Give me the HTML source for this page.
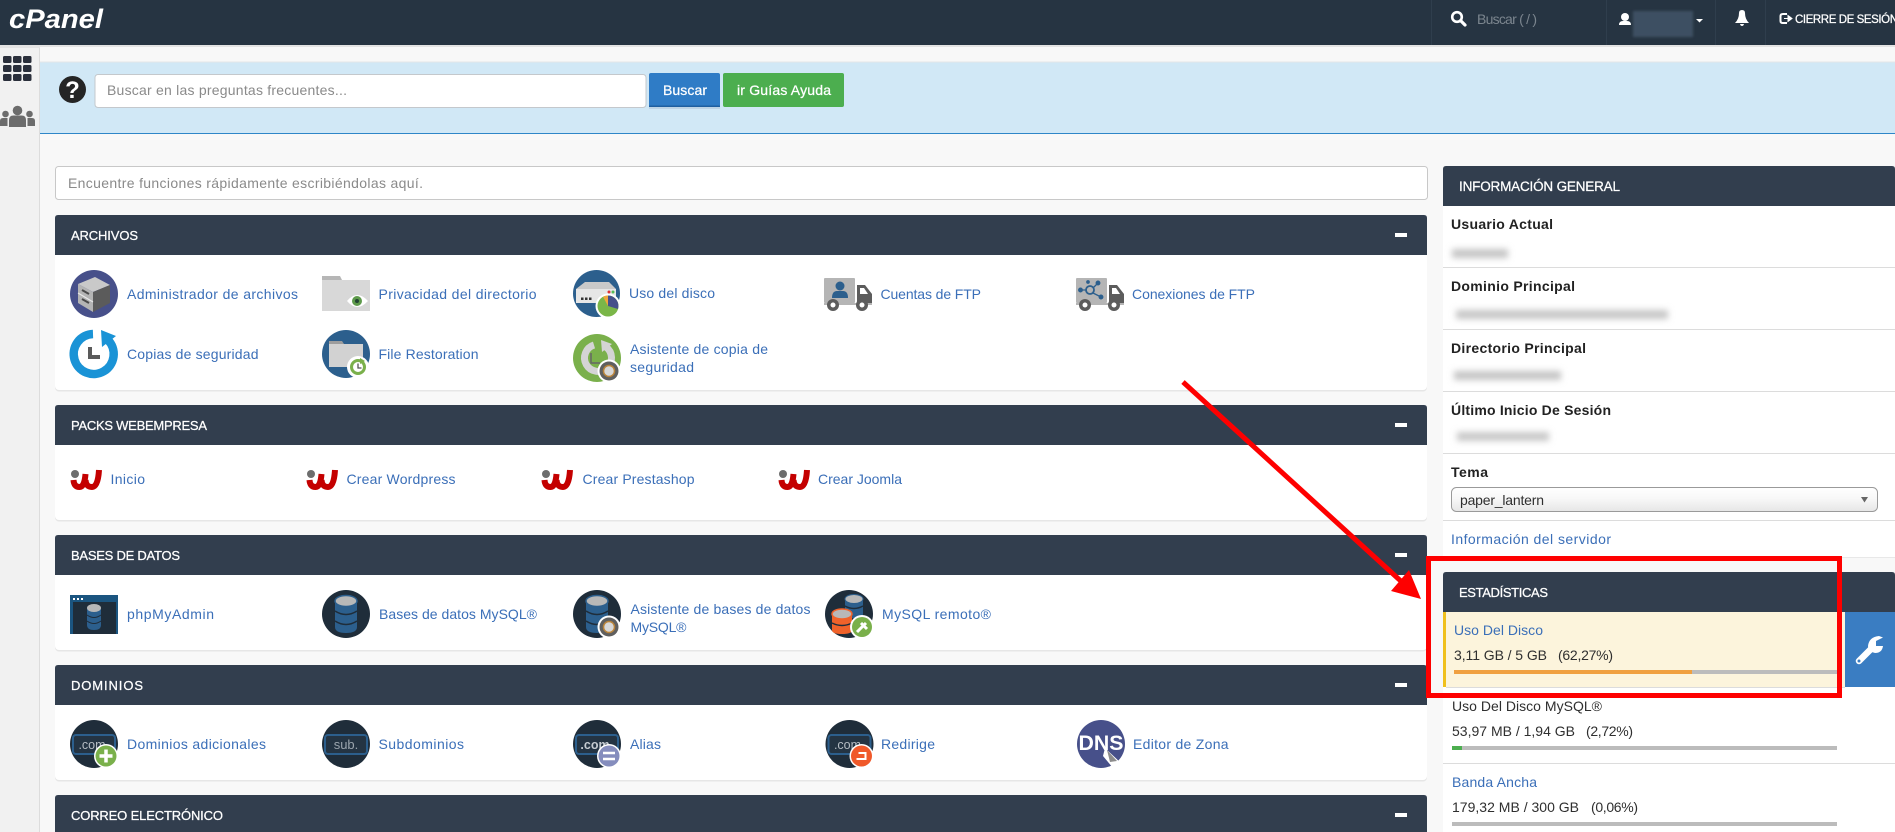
<!DOCTYPE html>
<html lang="es"><head><meta charset="utf-8"><title>cPanel</title>
<style>
html,body{margin:0;padding:0;width:1895px;height:832px;overflow:hidden;background:#f8f8f8}
svg{display:block;position:absolute;left:0;top:0}
text{font-family:"Liberation Sans",sans-serif;font-size:14px}
.l{fill:#3b6fb8}
.h{fill:#fff;stroke:#fff;stroke-width:.25;font-size:13px}
.b{font-weight:700;fill:#222}
.t{fill:#2f2f2f}
.p{fill:#8a8a8a}
.m{fill:#fff}
</style></head><body>
<svg width="1895" height="832" viewBox="0 0 1895 832" xmlns="http://www.w3.org/2000/svg">
<defs>
<filter id="bl" x="-20%" y="-80%" width="140%" height="260%"><feGaussianBlur stdDeviation="3.2"/></filter>
<filter id="bs" x="-20%" y="-50%" width="140%" height="200%"><feGaussianBlur stdDeviation="1.2"/></filter>
<linearGradient id="sel" x1="0" y1="0" x2="0" y2="1"><stop offset="0" stop-color="#fff"/><stop offset=".45" stop-color="#f8f8f8"/><stop offset="1" stop-color="#e6e6e6"/></linearGradient>
<g id="wlogo"><circle cx="5" cy="5" r="4" fill="#6d6d6d"/><path d="M3.500 11Q4 18 9.500 18Q14.500 18 15.500 5M15.500 11Q16 18 22 18Q28 18 29 1" fill="none" stroke="#c40000" stroke-width="6"/></g>
<g id="db"><path d="M13 11V37Q13 43 24 43Q35 43 35 37V11Z" fill="#2c5f8d"/><ellipse cx="24" cy="11" rx="11" ry="5.500" fill="#b8b8b8" stroke="#2c5f8d" stroke-width="1.500"/><path d="M13 21Q24 28 35 21M13 31Q24 38 35 31" fill="none" stroke="#1f2d3a" stroke-width="1.600"/></g>
<g id="dom"><circle cx="24" cy="24" r="24" fill="#1f2d3a"/><rect x="3" y="15" width="42" height="19" rx="3" fill="#243443" stroke="#2c5f8d" stroke-width="2"/></g>
<g id="wiz"><circle r="11.500" fill="#fff"/><circle r="9.500" fill="#5f5f5f"/><circle r="5.500" fill="#d8d8d8" stroke="#b9833a" stroke-width="1.500"/></g>
<g id="truck"><rect x="0" y="0" width="31" height="25" rx="1" fill="#b5b5b5"/><path d="M33 7H41L48 16V27H33Z" fill="#5c5c5c"/><path d="M36 10H40L44 16H36Z" fill="#fff"/><rect x="0" y="25" width="48" height="2" fill="#b5b5b5"/><circle cx="9" cy="27" r="6" fill="#5c5c5c"/><circle cx="9" cy="27" r="2.500" fill="#fff"/><circle cx="38" cy="27" r="6" fill="#5c5c5c"/><circle cx="38" cy="27" r="2.500" fill="#fff"/></g>
</defs>

<!-- sidebar -->
<rect x="0" y="45" width="40" height="787" fill="#f1f1f1"/>
<rect x="39" y="45" width="1" height="787" fill="#dcdcdc"/>
<g fill="#2a2f3b">
<rect x="3" y="56" width="8.500" height="7" rx="1.500"/><rect x="13" y="56" width="8.500" height="7" rx="1.500"/><rect x="23" y="56" width="8.500" height="7" rx="1.500"/>
<rect x="3" y="65" width="8.500" height="7" rx="1.500"/><rect x="13" y="65" width="8.500" height="7" rx="1.500"/><rect x="23" y="65" width="8.500" height="7" rx="1.500"/>
<rect x="3" y="74" width="8.500" height="7" rx="1.500"/><rect x="13" y="74" width="8.500" height="7" rx="1.500"/><rect x="23" y="74" width="8.500" height="7" rx="1.500"/>
</g>
<g fill="#6c6c6c">
<circle cx="17.500" cy="110.500" r="4.800"/><path d="M9 127V120Q9 115.500 13.500 115.500H21.500Q26 115.500 26 120V127Z"/>
<circle cx="5.500" cy="114" r="3.300"/><path d="M0 126V121Q0 118 3 118H7.500V126Z"/>
<circle cx="29.500" cy="114" r="3.300"/><path d="M35 126V121Q35 118 32 118H27.500V126Z"/>
</g>

<!-- top bar -->
<rect x="0" y="0" width="1895" height="45" fill="#263442"/>
<rect x="0" y="45" width="1895" height="2" fill="#e3e3e3"/>
<rect x="0" y="47" width="40" height="1" fill="#e3e3e3"/>
<text x="9" y="28" textLength="94" lengthAdjust="spacingAndGlyphs" style="font-size:27px;font-weight:700;font-style:italic" class="m">cPanel</text>
<g fill="#2f3e4d"><rect x="1431" y="0" width="1" height="45"/><rect x="1606" y="0" width="1" height="45"/><rect x="1715" y="0" width="1" height="45"/><rect x="1765" y="0" width="1" height="45"/></g>
<circle cx="1457" cy="17" r="4.800" fill="none" stroke="#fff" stroke-width="2.600"/><path d="M1461 21L1465 25" stroke="#fff" stroke-width="3.200" stroke-linecap="round"/>
<text x="1477" y="24" textLength="60" fill="#7b858e">Buscar ( / )</text>
<circle cx="1625" cy="17" r="4" fill="#fff"/><path d="M1619 25Q1619 21 1623 21H1627Q1631 21 1631 25Z" fill="#fff"/>
<rect x="1633" y="11" width="60" height="26" fill="#3e5062" filter="url(#bs)"/>
<path d="M1696 19H1703L1699.500 22.500Z" fill="#fff"/>
<path d="M1742 10Q1745 10 1745 13Q1745 19 1749 23H1735Q1739 19 1739 13Q1739 10 1742 10Z" fill="#fff"/><path d="M1740 24H1744Q1743.500 26 1742 26Q1740.500 26 1740 24Z" fill="#fff"/>
<path d="M1787 14H1783Q1780.500 14 1780.500 16V21Q1780.500 23 1783 23H1787" fill="none" stroke="#fff" stroke-width="2"/><path d="M1784 18.500H1788V15.500L1792 18.500L1788 21.500V18.500Z" fill="#fff" stroke="#fff"/>
<text x="1795" y="23" textLength="103" class="h" style="font-size:11.500px">CIERRE DE SESIÓN</text>

<!-- banner -->
<rect x="40" y="62" width="1855" height="71" fill="#d1e8f6"/>
<rect x="40" y="61.500" width="1855" height="1" fill="#e4e6e8"/>
<rect x="40" y="133" width="1855" height="1" fill="#2e86c8"/>
<circle cx="72.500" cy="89.500" r="13.500" fill="#252525"/>
<text x="72.500" y="98" text-anchor="middle" style="font-size:24px;font-weight:700" class="m">?</text>
<rect x="95" y="74.500" width="551" height="33" rx="3" fill="#fff" stroke="#c4c8cc"/>
<text x="107" y="95" textLength="240" class="p">Buscar en las preguntas frecuentes...</text>
<rect x="649" y="73" width="71" height="34" rx="2" fill="#2f7cc6"/><rect x="649" y="105.500" width="71" height="1.500" fill="#1f5fa0"/><rect x="649" y="107" width="71" height="2" fill="#bdd4e6"/>
<text x="663" y="95" textLength="44" class="h" style="font-size:14px">Buscar</text>
<rect x="723" y="73" width="121" height="34" rx="2" fill="#4cae4f"/>
<text x="737" y="95" textLength="94" class="h" style="font-size:14px">ir Guías Ayuda</text>

<!-- quick find -->
<rect x="55.500" y="166.500" width="1372" height="33" rx="3" fill="#fff" stroke="#c8c8c8"/>
<text x="68" y="188" textLength="355" class="p">Encuentre funciones rápidamente escribiéndolas aquí.</text>

<!-- panels left -->
<g fill="#e6e6e6"><rect x="55" y="216" width="1372" height="175.500" rx="4"/><rect x="55" y="406" width="1372" height="115.500" rx="4"/><rect x="55" y="536" width="1372" height="115.500" rx="4"/><rect x="55" y="666" width="1372" height="115.500" rx="4"/></g>
<g fill="#fff"><rect x="55" y="215" width="1372" height="175" rx="4"/><rect x="55" y="405" width="1372" height="115" rx="4"/><rect x="55" y="535" width="1372" height="115" rx="4"/><rect x="55" y="665" width="1372" height="115" rx="4"/></g>
<g fill="#323e4e">
<path d="M55 255V218Q55 215 58 215H1424Q1427 215 1427 218V255Z"/>
<path d="M55 445V408Q55 405 58 405H1424Q1427 405 1427 408V445Z"/>
<path d="M55 575V538Q55 535 58 535H1424Q1427 535 1427 538V575Z"/>
<path d="M55 705V668Q55 665 58 665H1424Q1427 665 1427 668V705Z"/>
<path d="M55 832V798Q55 795 58 795H1424Q1427 795 1427 798V832Z"/>
</g>
<text x="71" y="240" textLength="67" class="h">ARCHIVOS</text>
<text x="71" y="430" textLength="136" class="h">PACKS WEBEMPRESA</text>
<text x="71" y="560" textLength="109" class="h">BASES DE DATOS</text>
<text x="71" y="690" textLength="72" class="h">DOMINIOS</text>
<text x="71" y="820" textLength="152" class="h">CORREO ELECTRÓNICO</text>
<g fill="#fff"><rect x="1395" y="233" width="12" height="4"/><rect x="1395" y="423" width="12" height="4"/><rect x="1395" y="553" width="12" height="4"/><rect x="1395" y="683" width="12" height="4"/><rect x="1395" y="813" width="12" height="4"/></g>

<!-- ARCHIVOS icons -->
<g transform="translate(70,270)"><circle cx="24" cy="24" r="24" fill="#47508a"/><path d="M8 14L25 7L40 15L23 22Z" fill="#c9c9c9"/><path d="M8 14L23 22V42L8 33Z" fill="#b4b4b4"/><path d="M23 22L40 15V33L23 42Z" fill="#5b5b5b"/><path d="M8 23L23 32" stroke="#e8e8e8" stroke-width="1.200"/><path d="M12 20L19 24M12 29L19 33" stroke="#4a4a4a" stroke-width="2"/></g>
<g transform="translate(322,270)"><path d="M0 6H18L20 10H0Z" fill="#b6b6b6"/><rect x="0" y="10" width="48" height="31" fill="#d8d8d8"/><path d="M25 31Q35 19 46 31Q35 43 25 31Z" fill="#fff"/><circle cx="35" cy="31" r="5" fill="#5e9a4b"/><circle cx="35" cy="31" r="2" fill="#243"/></g>
<g transform="translate(573,270)"><circle cx="23.500" cy="23.500" r="23.500" fill="#2c5f8d"/><path d="M3 19L12 12H36L43 19Z" fill="#c9c9c9"/><rect x="3" y="19" width="40" height="14" fill="#e6e6e6"/><rect x="8" y="27.500" width="2.500" height="2.500" fill="#333"/><rect x="12" y="27.500" width="2.500" height="2.500" fill="#333"/><rect x="16" y="27.500" width="2.500" height="2.500" fill="#333"/><circle cx="36" cy="22" r="1.500" fill="#d33"/><circle cx="40" cy="22" r="1.500" fill="#5b5"/><circle cx="35" cy="36" r="12.500" fill="#fff"/><circle cx="35" cy="36" r="10.500" fill="#7ab648"/><path d="M35 36L35 25.500A10.500 10.500 0 0 1 45 39Z" fill="#46508a"/><path d="M35 36L30 26.800A10.500 10.500 0 0 1 35 25.500Z" fill="#f0a63c"/></g>
<g transform="translate(824,278)"><use href="#truck"/><circle cx="16" cy="8" r="4.500" fill="#2c5f8d"/><path d="M8 20Q8 13 13 13H19Q24 13 24 20Z" fill="#2c5f8d"/></g>
<g transform="translate(1076,278)"><use href="#truck"/><g fill="#2c5f8d" stroke="#2c5f8d" stroke-width="1.300"><circle cx="4.500" cy="12" r="1.800"/><circle cx="22" cy="5" r="1.800"/><circle cx="25" cy="19" r="1.800"/><circle cx="12" cy="4" r="1.200"/><path d="M5 12H11M17 10L22 5M17 15L25 19" fill="none"/></g><circle cx="14" cy="12" r="4" fill="none" stroke="#2c5f8d" stroke-width="1.800"/></g>
<g transform="translate(70,330)"><path d="M23 4A20 20 0 1 0 38 10" fill="none" stroke="#1a93d6" stroke-width="8.500"/><path d="M31 0L46 6L32 17Z" fill="#1a93d6"/><path d="M20 17V27H30" fill="none" stroke="#5a5a5a" stroke-width="4"/></g>
<g transform="translate(322,330)"><circle cx="24" cy="24" r="24" fill="#2c5f8d"/><path d="M7 11H20L22 14H7Z" fill="#9d9d9d"/><rect x="7" y="14" width="34" height="23" fill="#d2d2d2"/><circle cx="36" cy="37" r="11" fill="#fff"/><circle cx="36" cy="37" r="6.500" fill="none" stroke="#7ab04b" stroke-width="3"/><path d="M36 33.500V38H39.500" fill="none" stroke="#555" stroke-width="1.300"/><path d="M38 28L43 31L38 34Z" fill="#7ab04b"/></g>
<g transform="translate(573,334)"><circle cx="24" cy="24" r="24" fill="#7ab04b"/><path d="M21 11A13.500 13.500 0 1 0 33 13" fill="none" stroke="#d4d4d4" stroke-width="7"/><path d="M28 6L39 10L29 18Z" fill="#d4d4d4"/><path d="M18 19V29H27" fill="none" stroke="#666" stroke-width="1.500"/><use href="#wiz" x="36" y="37"/></g>
<text x="127" y="299" textLength="171" class="l">Administrador de archivos</text>
<text x="378.500" y="299" textLength="158" class="l">Privacidad del directorio</text>
<text x="629" y="298" textLength="86" class="l">Uso del disco</text>
<text x="880.500" y="299" textLength="100.500" class="l">Cuentas de FTP</text>
<text x="1132" y="299" textLength="123" class="l">Conexiones de FTP</text>
<text x="127" y="359" textLength="131.500" class="l">Copias de seguridad</text>
<text x="378.500" y="359" textLength="100" class="l">File Restoration</text>
<text x="630" y="354" textLength="138" class="l">Asistente de copia de</text>
<text x="630" y="372" textLength="64" class="l">seguridad</text>

<!-- PACKS -->
<use href="#wlogo" x="70" y="469"/><use href="#wlogo" x="306" y="469"/><use href="#wlogo" x="541" y="469"/><use href="#wlogo" x="778" y="469"/>
<text x="110.500" y="484" textLength="34.500" class="l">Inicio</text>
<text x="346.500" y="484" textLength="109" class="l">Crear Wordpress</text>
<text x="582.500" y="484" textLength="112" class="l">Crear Prestashop</text>
<text x="818" y="484" textLength="84" class="l">Crear Joomla</text>

<!-- BASES -->
<g transform="translate(70,595)"><rect width="48" height="39" fill="#1b5580"/><rect x="3" y="7" width="43" height="32" fill="#1f2d3a"/><g fill="#fff"><rect x="3" y="3" width="2" height="2"/><rect x="7" y="3" width="2" height="2"/><rect x="11" y="3" width="2" height="2"/></g><path d="M17 13V30Q17 35 24 35Q31 35 31 30V13Z" fill="#2c5f8d"/><ellipse cx="24" cy="13" rx="7" ry="4" fill="#b8b8b8"/><path d="M17 20Q24 25 31 20M17 26Q24 31 31 26" fill="none" stroke="#1f2d3a"/></g>
<g transform="translate(322,590)"><circle cx="24" cy="24" r="24" fill="#1f2d3a"/><use href="#db"/></g>
<g transform="translate(573,590)"><circle cx="24" cy="24" r="24" fill="#1f2d3a"/><use href="#db"/><use href="#wiz" x="36" y="37"/></g>
<g transform="translate(825,590)"><circle cx="24" cy="24" r="24" fill="#1f2d3a"/><path d="M20 9V24Q20 28 29 28Q38 28 38 24V9Z" fill="#2c5f8d"/><ellipse cx="29" cy="9" rx="9" ry="4.500" fill="#b8b8b8" stroke="#2c5f8d"/><path d="M20 16Q29 21 38 16" fill="none" stroke="#1f2d3a" stroke-width="1.400"/><path d="M7 24V40Q7 44 17 44Q27 44 27 40V24Z" fill="#f0622a"/><ellipse cx="17" cy="24" rx="10" ry="5" fill="#b8b8b8" stroke="#f0622a" stroke-width="1.500"/><path d="M7 33Q17 38 27 33" fill="none" stroke="#1f2d3a" stroke-width="1.400"/><circle cx="37" cy="37" r="12" fill="#fff"/><circle cx="37" cy="37" r="10" fill="#7ab04b"/><path d="M32 42L41 33M36 33L42 39" stroke="#fff" stroke-width="3"/></g>
<text x="127" y="619" textLength="87" class="l">phpMyAdmin</text>
<text x="379" y="619" textLength="158" class="l">Bases de datos MySQL®</text>
<text x="630.500" y="614" textLength="180" class="l">Asistente de bases de datos</text>
<text x="630.500" y="632" textLength="56" class="l">MySQL®</text>
<text x="882" y="619" textLength="109" class="l">MySQL remoto®</text>

<!-- DOMINIOS -->
<g transform="translate(70,720)"><use href="#dom"/><text x="22" y="29" text-anchor="middle" style="font-size:12.500px" fill="#b5bcc3">.com</text><circle cx="36" cy="36" r="12" fill="#fff"/><circle cx="36" cy="36" r="10.500" fill="#7ab04b"/><path d="M36 29.500V42.500M29.500 36H42.500" stroke="#fff" stroke-width="3.500"/></g>
<g transform="translate(322,720)"><use href="#dom"/><text x="24" y="29" text-anchor="middle" style="font-size:13px" fill="#9aa4ad">sub.</text></g>
<g transform="translate(573,720)"><use href="#dom"/><text x="22" y="29" text-anchor="middle" style="font-size:12.500px;font-weight:700" fill="#c4cad0">.com</text><circle cx="36" cy="36" r="12" fill="#fff"/><circle cx="36" cy="36" r="10.500" fill="#858dbd"/><path d="M30 33H42M30 39H42" stroke="#fff" stroke-width="2.600"/></g>
<g transform="translate(825.500,720)"><use href="#dom"/><text x="22" y="29" text-anchor="middle" style="font-size:12.500px" fill="#b5bcc3">.com</text><circle cx="36" cy="36" r="12" fill="#fff"/><circle cx="36" cy="36" r="10.500" fill="#f0592a"/><path d="M31 39H40V33H33" fill="none" stroke="#fff" stroke-width="2"/></g>
<g transform="translate(1077,720)"><circle cx="24" cy="24" r="24" fill="#47508a"/><text x="24" y="30" text-anchor="middle" textLength="45" lengthAdjust="spacingAndGlyphs" style="font-size:21px;font-weight:700" class="m">DNS</text><path d="M28 28L46 45L40 46L36 48L26 36Z" fill="#fff"/><path d="M30 30L40 41L33 42Z" fill="#8c8c8c"/></g>
<text x="127" y="749" textLength="139" class="l">Dominios adicionales</text>
<text x="378.500" y="749" textLength="85.500" class="l">Subdominios</text>
<text x="630" y="749" textLength="31" class="l">Alias</text>
<text x="881" y="749" textLength="54" class="l">Redirige</text>
<text x="1133" y="749" textLength="95.600" class="l">Editor de Zona</text>

<!-- right: general info -->
<rect x="1443" y="206" width="452" height="352" fill="#e8e8e8"/>
<rect x="1443" y="206" width="452" height="351" fill="#fff"/>
<path d="M1443 206V169Q1443 166 1446 166H1892Q1895 166 1895 169V206Z" fill="#323e4e"/>
<text x="1459" y="191" textLength="161" class="h" style="font-size:13.500px">INFORMACIÓN GENERAL</text>
<text x="1451" y="229" textLength="102" class="b">Usuario Actual</text>
<rect x="1452" y="249" width="56" height="9" fill="#c4c4c4" filter="url(#bl)"/>
<rect x="1443" y="267" width="452" height="1" fill="#dcdcdc"/>
<text x="1451" y="291" textLength="124" class="b">Dominio Principal</text>
<rect x="1456" y="310" width="212" height="9" fill="#c6c6c6" filter="url(#bl)"/>
<rect x="1443" y="329" width="452" height="1" fill="#dcdcdc"/>
<text x="1451" y="353" textLength="135" class="b">Directorio Principal</text>
<rect x="1454" y="371" width="107" height="9" fill="#c4c4c4" filter="url(#bl)"/>
<rect x="1443" y="391" width="452" height="1" fill="#dcdcdc"/>
<text x="1451" y="415" textLength="160" class="b">Último Inicio De Sesión</text>
<rect x="1457" y="432" width="92" height="9" fill="#c8c8c8" filter="url(#bl)"/>
<rect x="1443" y="453" width="452" height="1" fill="#dcdcdc"/>
<text x="1451" y="477" textLength="37" class="b">Tema</text>
<rect x="1451.500" y="487.500" width="426" height="24" rx="5" fill="url(#sel)" stroke="#9a9a9a"/>
<text x="1460" y="505" textLength="84" class="t">paper_lantern</text>
<path d="M1861 497H1868L1864.500 502.500Z" fill="#666"/>
<rect x="1443" y="520" width="452" height="1" fill="#dcdcdc"/>
<text x="1451" y="544" textLength="160" class="l">Información del servidor</text>

<!-- right: stats -->
<rect x="1443" y="612" width="452" height="220" fill="#fff"/>
<path d="M1443 612V575Q1443 572 1446 572H1892Q1895 572 1895 575V612Z" fill="#323e4e"/>
<text x="1459" y="597" textLength="89" class="h">ESTADÍSTICAS</text>
<rect x="1443" y="612" width="402" height="75" fill="#fcf4dc"/>
<rect x="1443" y="612" width="3" height="75" fill="#f0c01c"/>
<rect x="1845" y="612" width="50" height="75" fill="#3a7dc2"/>
<rect x="1446" y="687" width="399" height="1" fill="#dcdcdc"/>
<text x="1454" y="635" textLength="89" class="l">Uso Del Disco</text>
<text x="1454" y="660" textLength="93" class="t">3,11 GB / 5 GB</text>
<text x="1558" y="660" textLength="55" class="t">(62,27%)</text>
<rect x="1454" y="670" width="383" height="4" fill="#bcbcbc"/><rect x="1454" y="670" width="238" height="4" fill="#f0a040"/>
<g transform="translate(1855,636)"><path d="M4 25L17 12" stroke="#fff" stroke-width="6.500" stroke-linecap="round"/><path d="M13 10Q14 1 24 0L28 1.500L21 5V10H28Q27 17 20 17L13.500 15Z" fill="#fff"/><circle cx="4" cy="25" r="1.500" fill="#3a7dc2"/></g>
<text x="1452" y="711" textLength="150" class="t">Uso Del Disco MySQL®</text>
<text x="1452" y="736" textLength="123" class="t">53,97 MB / 1,94 GB</text>
<text x="1586" y="736" textLength="47" class="t">(2,72%)</text>
<rect x="1452" y="746" width="385" height="4" fill="#bcbcbc"/><rect x="1452" y="746" width="10" height="4" fill="#4cae4f"/>
<rect x="1443" y="763" width="452" height="1" fill="#dcdcdc"/>
<text x="1452" y="787" textLength="85" class="l">Banda Ancha</text>
<text x="1452" y="812" textLength="127" class="t">179,32 MB / 300 GB</text>
<text x="1591" y="812" textLength="47" class="t">(0,06%)</text>
<rect x="1452" y="822" width="385" height="4" fill="#bcbcbc"/>

<!-- annotations -->
<rect x="1428.500" y="558.500" width="411" height="137" fill="none" stroke="#fe0000" stroke-width="5"/>
<path d="M1183 382L1403 583" stroke="#fe0000" stroke-width="5"/>
<path d="M1409 570L1421 599L1391 591Z" fill="#fe0000"/>
</svg>
</body></html>
